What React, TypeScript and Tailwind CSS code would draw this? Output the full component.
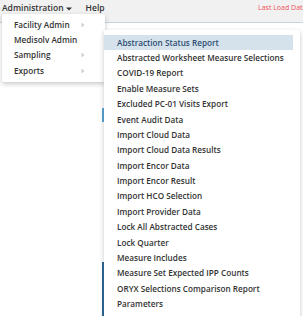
import React from "react";

const subItems = [
  "Abstraction Status Report",
  "Abstracted Worksheet Measure Selections",
  "COVID-19 Report",
  "Enable Measure Sets",
  "Excluded PC-01 Visits Export",
  "Event Audit Data",
  "Import Cloud Data",
  "Import Cloud Data Results",
  "Import Encor Data",
  "Import Encor Result",
  "Import HCO Selection",
  "Import Provider Data",
  "Lock All Abstracted Cases",
  "Lock Quarter",
  "Measure Includes",
  "Measure Set Expected IPP Counts",
  "ORYX Selections Comparison Report",
  "Parameters",
];

const leftItems: { label: string; arrow: boolean }[] = [
  { label: "Facility Admin", arrow: true },
  { label: "Medisolv Admin", arrow: false },
  { label: "Sampling", arrow: true },
  { label: "Exports", arrow: true },
];

function Chevron() {
  return (
    <svg width="4" height="6" viewBox="0 0 4 6" className="shrink-0">
      <path d="M0.5 0.5 L3.5 3 L0.5 5.5 Z" fill="#cfcfcf" />
    </svg>
  );
}

export default function App() {
  return (
    <div
      className="relative w-[303px] h-[316px] overflow-hidden bg-white text-[#333]"
      style={{ fontFamily: '"Open Sans", "Liberation Sans", sans-serif' }}
    >
      {/* navbar */}
      <div className="h-[23px] bg-[#f1f1f1] flex items-start pt-[1px] border-b border-[#c9d3dc]">
        <div className="flex items-center pl-[2px] text-[8.5px] font-semibold text-[#333] h-[14px]">
          <span>Administration</span>
          <svg width="6" height="4" viewBox="0 0 6 4" className="ml-[2px] mt-[1px]">
            <path d="M0 0.5 L6 0.5 L3 3.5 Z" fill="#333" />
          </svg>
        </div>
        <div className="ml-[14px] text-[8.5px] font-semibold h-[14px] flex items-center">Help</div>
        <div className="ml-auto w-[45px] overflow-hidden h-[14px] flex items-center">
          <span className="text-[7px] text-[#f0505a] whitespace-nowrap">Last Load Date</span>
        </div>
      </div>
      {/* page background hints */}
      <div className="flex">
        <div className="w-[102px]" />
        <div className="flex flex-col">
          <div className="h-[85px]" />
          <div className="w-[2px] h-[14px] bg-[#5aa6d6]" />
          <div className="h-[140px]" />
          <div className="w-[2px] h-[60px] bg-[#2b6a9a]" />
        </div>
      </div>

      {/* left dropdown */}
      <div className="absolute left-[2px] top-[14px] w-[103px] h-[68px] bg-white rounded-[2px] shadow-[0_2px_5px_rgba(0,0,0,0.22)] pt-[3px]">
        {leftItems.map((it) => (
          <div
            key={it.label}
            className="h-[15.4px] flex items-center pl-[12px] pr-[20px] text-[8.2px] font-semibold text-[#333]"
          >
            <span className="flex-1 whitespace-nowrap">{it.label}</span>
            {it.arrow && <Chevron />}
          </div>
        ))}
      </div>

      {/* sub dropdown */}
      <div className="absolute left-[104px] top-[30px] w-[196px] h-[300px] bg-white shadow-[0_2px_5px_rgba(0,0,0,0.22)] pt-[5px]">
        {subItems.map((s, i) => (
          <div
            key={s}
            className={
              "h-[15.4px] flex items-center pl-[13px] mr-[7px] text-[8.2px] font-semibold whitespace-nowrap " +
              (i === 0 ? "bg-[#d5e2ec] text-[#2d4d72]" : "text-[#333]")
            }
          >
            {s}
          </div>
        ))}
      </div>
    </div>
  );
}
